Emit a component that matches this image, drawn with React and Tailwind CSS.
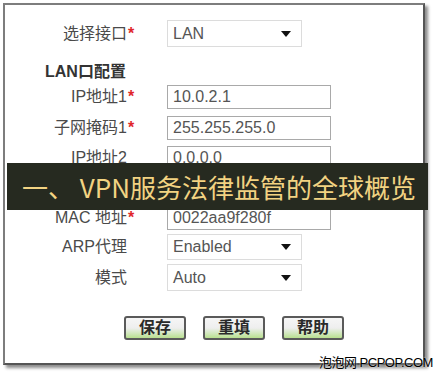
import React from 'react';

const FONT = "font-['Liberation_Sans','Noto_Sans_CJK_SC',sans-serif]";

const Label = ({ text, required }) => (
  <div className="w-[134px] flex justify-end items-center shrink-0 text-[16px] text-[#4a4a4a] leading-none">
    <span>{text}</span>
    <span className="w-[12px] pl-[1px] text-[#e0262b] text-[16px] font-bold">{required ? '*' : ''}</span>
  </div>
);

const TextRow = ({ label, required, value, className }) => (
  <div className={`flex items-center h-[24px] ${className || ''}`}>
    <Label text={label} required={required} />
    <div className="ml-[28px] w-[164px] h-[24px] border border-[#a9a9a9] bg-white flex items-center pl-[5px] text-[16px] text-[#555] leading-none">
      {value}
    </div>
  </div>
);

const SelectRow = ({ label, required, value, className, h = 'h-[26px]' }) => (
  <div className={`flex items-center ${h} ${className || ''}`}>
    <Label text={label} required={required} />
    <div className={`ml-[28px] w-[135px] ${h} border border-[#dcdcdc] bg-white flex items-center justify-between pl-[5px] pr-[10px] text-[16px] text-[#555] leading-none`}>
      <span>{value}</span>
      <svg width="10" height="6" viewBox="0 0 10 6"><path d="M0 0 L10 0 L5 6 Z" fill="#111" /></svg>
    </div>
  </div>
);

const Btn = ({ children }) => (
  <div className="w-[62px] h-[24px] border-2 border-[#5a5a5a] rounded-[3px] bg-gradient-to-b from-[#f6f6f6] via-[#eeeeee] to-[#b9e08f] flex items-center justify-center text-[16px] font-bold text-[#2a2a2a] leading-none">
    {children}
  </div>
);

export default function App() {
  return (
    <div className={`relative w-[438px] h-[375px] bg-white overflow-hidden ${FONT}`}>
      <div className="ml-[3px] mt-[3px] w-[422px] h-[362px] border-2 border-[#7d7d7d] border-r-[#555] border-b-[#555] bg-white shadow-[3px_3px_3px_rgba(0,0,0,0.45)] pt-[15px]">
        <SelectRow label="选择接口" required value="LAN" h="h-[27px]" />
        <div className="ml-[40px] mt-[15px] h-[20px] flex items-center text-[16px] font-bold text-[#333] leading-none">LAN口配置</div>
        <TextRow className="mt-[3px]" label="IP地址1" required value="10.0.2.1" />
        <TextRow className="mt-[7px]" label="子网掩码1" required value="255.255.255.0" />
        <TextRow className="mt-[6px]" label="IP地址2" value="0.0.0.0" />
        <div className="mt-[6px] h-[24px]" />
        <TextRow className="mt-[6px]" label="MAC 地址" required value="0022aa9f280f" />
        <SelectRow className="mt-[4px]" label="ARP代理" value="Enabled" />
        <SelectRow className="mt-[4px]" label="模式" value="Auto" h="h-[27px]" />
        <div className="mt-[25px] ml-[119px] flex gap-[17px]">
          <Btn>保存</Btn>
          <Btn>重填</Btn>
          <Btn>帮助</Btn>
        </div>
      </div>

      <div className="absolute left-[7px] top-[163px] w-[421px] h-[47px] bg-[#262a20] flex items-center pl-[15px] font-['Noto_Sans_CJK_SC',sans-serif] text-[26px] text-[#f2d382] leading-none whitespace-nowrap">
        一、 VPN服务法律监管的全球概览
      </div>

      <div className="absolute left-[319px] top-[356px] whitespace-nowrap text-[13px] text-black leading-none tracking-[-0.5px] [text-shadow:0_0_2px_#fff]">
        泡泡网 PCPOP.COM
      </div>
    </div>
  );
}
